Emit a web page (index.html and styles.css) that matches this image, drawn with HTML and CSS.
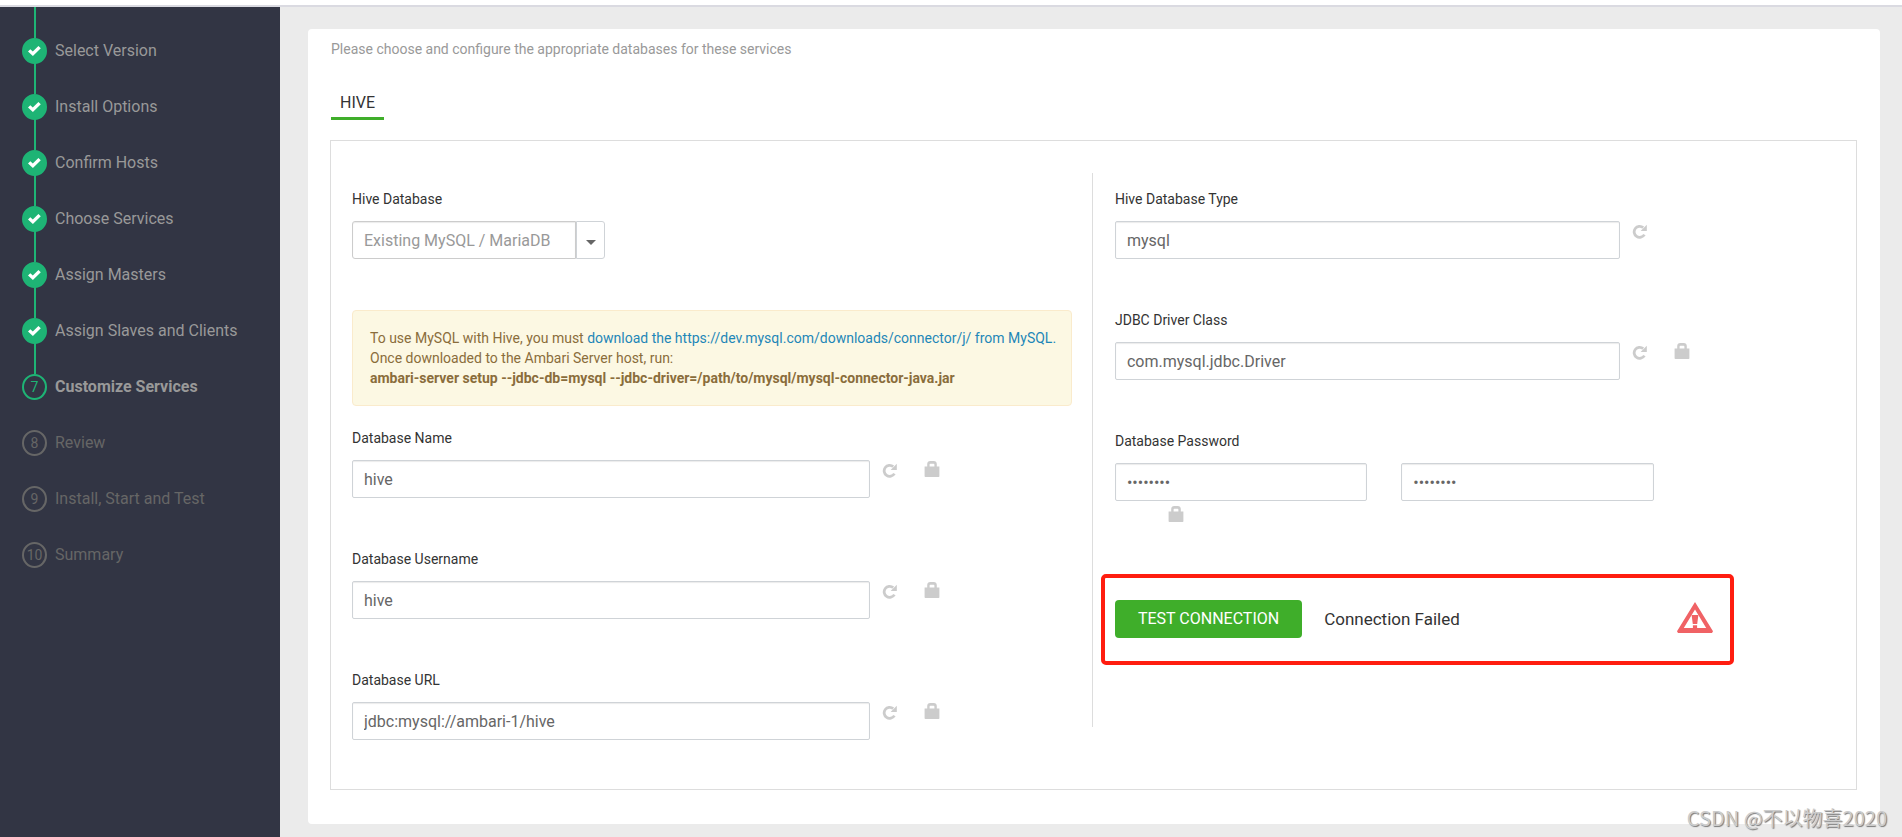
FILE: index.html
```html
<!DOCTYPE html>
<html lang="en">
<head>
<meta charset="utf-8">
<title>Customize Services</title>
<link rel="stylesheet" href="styles.css">
</head>
<body>
<svg class="sprite" aria-hidden="true">
  <symbol id="ok" viewBox="0 0 13 10"><path d="M0 5.4 2.3 3.2 4.8 5.4 10.4 0 12.8 2.2 4.9 10Z"/></symbol>
  <symbol id="refresh" viewBox="0 0 15 15"><path d="M12.4 10.6A5.5 5.5 0 1 1 11.2 3.6" fill="none" stroke="currentColor" stroke-width="2.8"/><path d="M14.8.8V7H8.6Z"/></symbol>
  <symbol id="lock" viewBox="0 0 16 16"><path fill-rule="evenodd" d="M0.6 5.4H3.2V3C3.2 1.2 4.4 0 6.2 0H9.8C11.6 0 12.8 1.2 12.8 3V5.4H15.4V15.2Q15.4 16 14.6 16H1.4Q.6 16 .6 15.2ZM5.6 5.4H10.4V3.6Q10.4 2.8 9.6 2.8H6.4Q5.6 2.8 5.6 3.6Z"/></symbol>
  <symbol id="warning" viewBox="0 0 36 31"><path fill-rule="evenodd" d="M18 0 36 29.2 35 31H1L0 29.2ZM18 7.5 6.8 26H29.2Z"/><path d="M14.6 13H21.4L20.2 22H15.8ZM15.9 23.2H20.1V26H15.9Z"/></symbol>
</svg>
<div class="topbar"></div>
<div class="layout">
  <nav class="sidebar" aria-label="Install wizard">
    <ol class="steps">
      <li class="step done"><span class="mark"><svg class="ok"><use href="#ok"/></svg></span>Select Version</li>
      <li class="step done"><span class="mark"><svg class="ok"><use href="#ok"/></svg></span>Install Options</li>
      <li class="step done"><span class="mark"><svg class="ok"><use href="#ok"/></svg></span>Confirm Hosts</li>
      <li class="step done"><span class="mark"><svg class="ok"><use href="#ok"/></svg></span>Choose Services</li>
      <li class="step done"><span class="mark"><svg class="ok"><use href="#ok"/></svg></span>Assign Masters</li>
      <li class="step done"><span class="mark"><svg class="ok"><use href="#ok"/></svg></span>Assign Slaves and Clients</li>
      <li class="step current"><span class="mark">7</span>Customize Services</li>
      <li class="step"><span class="mark">8</span>Review</li>
      <li class="step"><span class="mark">9</span>Install, Start and Test</li>
      <li class="step"><span class="mark">10</span>Summary</li>
    </ol>
  </nav>
  <main class="content">
    <section class="card">
      <p class="intro">Please choose and configure the appropriate databases for these services</p>
      <div class="tabs"><button class="tab" type="button">HIVE</button></div>
      <form class="panel">
        <div class="col col-left">
          <div class="field">
            <label for="hive-db">Hive Database</label>
            <div class="combo">
              <input class="input" id="hive-db" type="text" value="Existing MySQL / MariaDB">
              <button class="toggle" type="button" aria-label="Choose database"><span class="caret"></span></button>
            </div>
          </div>
          <div class="alert">To use MySQL with Hive, you must <a href="#">download the https://dev.mysql.com/downloads/connector/j/ from MySQL.</a><br>Once downloaded to the Ambari Server host, run:<br><b>ambari-server setup --jdbc-db=mysql --jdbc-driver=/path/to/mysql/mysql-connector-java.jar</b></div>
          <div class="field">
            <label for="db-name">Database Name</label>
            <div class="row">
              <input class="input wide" id="db-name" type="text" value="hive">
              <button class="icon" type="button" aria-label="Reset"><svg class="refresh"><use href="#refresh"/></svg></button>
              <button class="icon" type="button" aria-label="Lock"><svg class="lock"><use href="#lock"/></svg></button>
            </div>
          </div>
          <div class="field">
            <label for="db-user">Database Username</label>
            <div class="row">
              <input class="input wide" id="db-user" type="text" value="hive">
              <button class="icon" type="button" aria-label="Reset"><svg class="refresh"><use href="#refresh"/></svg></button>
              <button class="icon" type="button" aria-label="Lock"><svg class="lock"><use href="#lock"/></svg></button>
            </div>
          </div>
          <div class="field">
            <label for="db-url">Database URL</label>
            <div class="row">
              <input class="input wide" id="db-url" type="text" value="jdbc:mysql://ambari-1/hive">
              <button class="icon" type="button" aria-label="Reset"><svg class="refresh"><use href="#refresh"/></svg></button>
              <button class="icon" type="button" aria-label="Lock"><svg class="lock"><use href="#lock"/></svg></button>
            </div>
          </div>
        </div>
        <div class="col col-right">
          <div class="field">
            <label for="db-type">Hive Database Type</label>
            <div class="row">
              <input class="input medium" id="db-type" type="text" value="mysql">
              <button class="icon" type="button" aria-label="Reset"><svg class="refresh"><use href="#refresh"/></svg></button>
            </div>
          </div>
          <div class="field">
            <label for="driver">JDBC Driver Class</label>
            <div class="row">
              <input class="input medium" id="driver" type="text" value="com.mysql.jdbc.Driver">
              <button class="icon" type="button" aria-label="Reset"><svg class="refresh"><use href="#refresh"/></svg></button>
              <button class="icon" type="button" aria-label="Lock"><svg class="lock"><use href="#lock"/></svg></button>
            </div>
          </div>
          <div class="field password">
            <label for="pw">Database Password</label>
            <div class="row pair">
              <input class="input" id="pw" type="password" value="password">
              <input class="input" type="password" value="password" aria-label="Confirm password">
            </div>
            <button class="icon below" type="button" aria-label="Lock"><svg class="lock"><use href="#lock"/></svg></button>
          </div>
          <div class="test">
            <button class="primary" type="button">TEST CONNECTION</button>
            <span class="result">Connection Failed</span>
            <svg class="warning" role="img" aria-label="Warning"><use href="#warning"/></svg>
          </div>
        </div>
      </form>
    </section>
    <div class="watermark">CSDN @不以物喜2020</div>
  </main>
</div>
</body>
</html>
```
FILE: styles.css
```css
* { box-sizing: border-box; }
body {
  margin: 0;
  min-height: 100vh;
  display: flex;
  flex-direction: column;
  background: #ebebeb;
  color: #333;
  font: 14px/20px Roboto, "Noto Sans", sans-serif;
}
button, input { font: inherit; margin: 0; }
button { cursor: pointer; }
.sprite { display: none; }
.topbar { height: 7px; background: #fff; border-bottom: 2px solid #dadae1; }
.layout { flex: 1; display: flex; }

.sidebar { width: 280px; flex: none; background: #323544; }
.steps { list-style: none; margin: 0; padding: 0 0 0 22px; }
.step {
  position: relative;
  display: flex;
  align-items: center;
  gap: 8px;
  height: 26px;
  margin-bottom: 30px;
  font-size: 16px;
  color: #666;
}
.step:first-child { margin-top: 31px; }
.step.done { color: #999; }
.step.current { color: #999; font-weight: 700; }
.step.done::before, .step.current::before {
  content: "";
  position: absolute;
  left: 12px;
  bottom: 100%;
  width: 2px;
  height: 31px;
  background: #1eb475;
}
.mark {
  display: flex;
  align-items: center;
  justify-content: center;
  width: 25px;
  height: 26px;
  border: 2px solid #666;
  border-radius: 50%;
  font-size: 14px;
  font-weight: 400;
}
.done .mark { background: #1eb475; border-color: #1eb475; }
.current .mark { border-color: #1eb475; color: #1eb475; }
.ok { width: 13px; height: 10px; fill: #fff; }

.content { flex: 1; position: relative; padding: 22px 22px 13px 28px; }
.card {
  min-height: 795px;
  background: #fff;
  border-radius: 4px;
  padding: 10px 23px 34px 22px;
}
.intro { margin: 0; padding-left: 1px; color: #999; }
.tabs { margin: 34px 0 20px 1px; display: flex; }
.tab {
  border: 0;
  border-bottom: 3px solid #3fae2a;
  background: none;
  padding: 0 9px 4px;
  font-size: 16px;
  line-height: 20px;
  color: #333;
}
.panel {
  display: grid;
  grid-template-columns: 499fr 501fr;
  align-items: start;
  min-height: 650px;
  border: 1px solid #ddd;
  padding: 32px 0 49px;
}
.col { min-width: 0; padding: 16px 20px 0 21px; }
.col-right { border-left: 1px solid #ddd; padding-left: 22px; padding-bottom: 89px; }
.field { margin-bottom: 51px; }
.col-left .field:last-child { margin-bottom: 0; }
.field label { display: block; margin-bottom: 12px; }
.row { display: flex; align-items: flex-start; }
.input {
  height: 38px;
  min-width: 0;
  padding: 0 11px;
  border: 1px solid #cfd3d7;
  border-radius: 2px;
  background: #fff;
  box-shadow: inset 0 1px 1px rgba(0, 0, 0, .08);
  font-size: 16px;
  color: #666;
}
.wide { width: 72%; }
.medium { width: 70%; }
.combo { display: flex; width: 253px; }
.combo .input { flex: 1; color: #999; border-color: #ccc; border-radius: 3px 0 0 3px; }
.toggle {
  display: flex;
  align-items: center;
  justify-content: center;
  width: 29px;
  padding: 4px 0 0;
  border: 1px solid #cfd3d7;
  border-radius: 0 3px 3px 0;
  background: #fff;
}
.caret { border: 5px solid transparent; border-top-color: #666; border-bottom: 0; }
.icon {
  border: 0;
  background: none;
  padding: 1px 0 0;
  margin-left: 12px;
  line-height: 0;
  color: #ccc;
}
.icon svg { fill: currentColor; }
.icon + .icon { margin-left: 27px; }
.refresh { width: 15px; height: 15px; margin-top: 2px; }
.lock { width: 16px; height: 16px; }
.alert {
  margin-bottom: 22px;
  padding: 17px 4px 17px 17px;
  border: 1px solid #faebcc;
  border-radius: 4px;
  background: #fcf8e3;
  color: #8a6d3b;
}
.alert a { color: #1e87b8; text-decoration: none; }
.pair { gap: 34px; }
.pair .input { width: 35%; }
.password { margin-bottom: 78px; }
.icon.below { display: block; margin: 4px 0 0 53px; }
.test { position: relative; display: flex; align-items: center; width: 83%; }
.test::before {
  content: "";
  position: absolute;
  inset: -26px -21px -27px -14px;
  border: 4px solid #ff1d10;
  border-radius: 5px;
  pointer-events: none;
}
.primary {
  height: 38px;
  padding: 0 23px;
  border: 0;
  border-radius: 4px;
  background: #3fae2a;
  color: #fff;
  font-size: 16px;
}
.result { margin-left: 22px; font-size: 17px; }
.warning { width: 36px; height: 31px; margin: 0 0 4px auto; fill: #f06265; }
.watermark {
  position: absolute;
  right: 15px;
  bottom: 6px;
  font: 20px/26px "Noto Sans CJK SC", sans-serif;
  color: #ccc;
  text-shadow: 1px 1px 1px #777;
}
```
